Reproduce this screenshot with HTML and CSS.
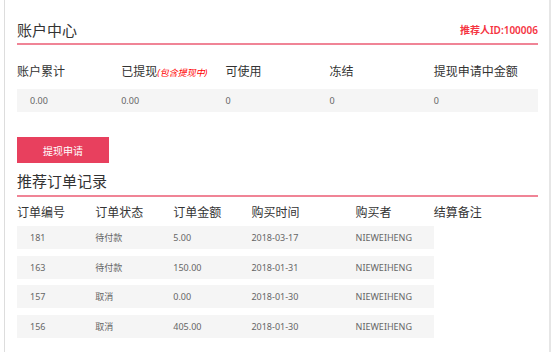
FILE: index.html
```html
<!DOCTYPE html>
<html lang="zh-CN">
<head>
  <meta charset="UTF-8">
  <meta name="viewport" content="width=device-width, initial-scale=1.0">
  <title>账户中心</title>
  <link rel="stylesheet" href="styles.css">
</head>
<body>
  <div class="page">
    <div class="title-bar">
      <h2 class="title">账户中心</h2>
      <span class="referrer">推荐人ID:100006</span>
    </div>

    <div class="stats-head">
      <div>账户累计</div>
      <div>已提现<em class="hint">(包含提现中)</em></div>
      <div>可使用</div>
      <div>冻结</div>
      <div>提现申请中金额</div>
    </div>
    <div class="stats-row">
      <div class="first">0.00</div>
      <div>0.00</div>
      <div>0</div>
      <div>0</div>
      <div>0</div>
    </div>

    <button class="btn">提现申请</button>

    <div class="title-bar section">
      <h2 class="title">推荐订单记录</h2>
    </div>

    <div class="orders-head">
      <div>订单编号</div>
      <div>订单状态</div>
      <div>订单金额</div>
      <div>购买时间</div>
      <div>购买者</div>
      <div>结算备注</div>
    </div>
    <div class="orders-list">
      <div class="order-row">
        <div class="cell first">181</div>
        <div class="cell">待付款</div>
        <div class="cell">5.00</div>
        <div class="cell">2018-03-17</div>
        <div class="cell">NIEWEIHENG</div>
        <div class="note"></div>
      </div>
      <div class="order-row">
        <div class="cell first">163</div>
        <div class="cell">待付款</div>
        <div class="cell">150.00</div>
        <div class="cell">2018-01-31</div>
        <div class="cell">NIEWEIHENG</div>
        <div class="note"></div>
      </div>
      <div class="order-row">
        <div class="cell first">157</div>
        <div class="cell">取消</div>
        <div class="cell">0.00</div>
        <div class="cell">2018-01-30</div>
        <div class="cell">NIEWEIHENG</div>
        <div class="note"></div>
      </div>
      <div class="order-row">
        <div class="cell first">156</div>
        <div class="cell">取消</div>
        <div class="cell">405.00</div>
        <div class="cell">2018-01-30</div>
        <div class="cell">NIEWEIHENG</div>
        <div class="note"></div>
      </div>
    </div>
  </div>
</body>
</html>
```

FILE: styles.css
```css
body {
  margin: 0;
  font-family: "Noto Sans", "Noto Sans CJK SC", sans-serif;
  background-color: #fff;
}

.page {
  margin-left: 4px;
  width: 521px;
  min-height: 352px;
  padding: 0 11px 0 12px;
  border-left: 1px solid #ddd;
  border-right: 2px solid #e6e6e6;
}

.title-bar {
  display: flex;
  justify-content: space-between;
  align-items: center;
  padding-top: 20px;
  padding-bottom: 3px;
  border-bottom: 2px solid #f08496;
}

.title-bar.section {
  padding-top: 0;
  margin-top: 8px;
  padding-bottom: 4px;
}

.title {
  margin: 0;
  font-size: 15px;
  font-weight: normal;
  line-height: 20px;
  color: #333;
}

.referrer {
  font-size: 10px;
  font-weight: 600;
  line-height: 14px;
  color: #f5333f;
}

/* Account summary */
.stats-head,
.stats-row {
  display: grid;
  grid-template-columns: repeat(5, 1fr);
}

.stats-head {
  margin-top: 19px;
  font-size: 12px;
  line-height: 16px;
  color: #333;
}

.hint {
  font-size: 9px;
  color: #f00;
}

.stats-row {
  margin-top: 8px;
  height: 23px;
  line-height: 23px;
  background-color: #f5f5f5;
  font-size: 9px;
  color: #666;
}

.first {
  padding-left: 13px;
}

.btn {
  display: block;
  margin-top: 25px;
  width: 92px;
  height: 26px;
  padding: 0;
  border: none;
  background-color: #e8405e;
  color: #fff;
  font-family: inherit;
  font-size: 10px;
  cursor: pointer;
}

/* Orders */
.orders-head,
.order-row {
  display: grid;
  grid-template-columns: 15% 15% 15% 20% 15% 20%;
}

.orders-head {
  margin-top: 8px;
  font-size: 12px;
  line-height: 16px;
  color: #333;
}

.orders-list {
  display: flex;
  flex-direction: column;
  gap: 6.5px;
  margin-top: 5px;
}

.order-row {
  height: 23px;
  line-height: 23px;
  font-size: 9px;
  color: #666;
}

.cell {
  background-color: #f5f5f5;
}
```
